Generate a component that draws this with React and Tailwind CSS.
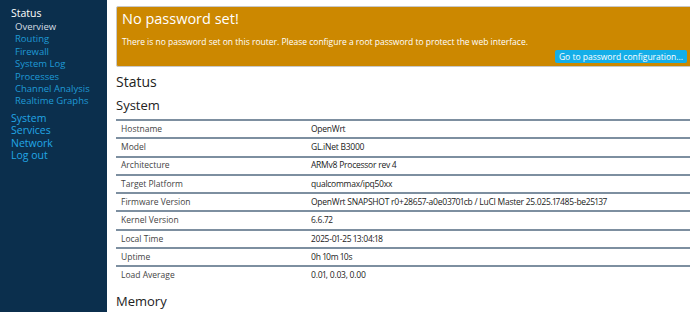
import React from 'react';

const subMenu = ['Overview', 'Routing', 'Firewall', 'System Log', 'Processes', 'Channel Analysis', 'Realtime Graphs'];
const topMenu = ['System', 'Services', 'Network', 'Log out'];

const rows = [
  ['Hostname', 'OpenWrt'],
  ['Model', 'GL.iNet B3000'],
  ['Architecture', 'ARMv8 Processor rev 4'],
  ['Target Platform', 'qualcommax/ipq50xx'],
  ['Firmware Version', 'OpenWrt SNAPSHOT r0+28657-a0e03701cb / LuCI Master 25.025.17485-be25137'],
  ['Kernel Version', '6.6.72'],
  ['Local Time', '2025-01-25 13:04:18'],
  ['Uptime', '0h 10m 10s'],
  ['Load Average', '0.01, 0.03, 0.00'],
];

const App = () => {
  return (
    <div
      className="flex w-[690px] h-[312px] overflow-hidden bg-white"
      style={{ fontFamily: '"Open Sans", "Liberation Sans", sans-serif' }}
    >
      {/* Sidebar */}
      <div className="w-[107px] shrink-0 bg-[#0b2f4d] pt-[6px] pl-[11px]">
        <div className="text-[10.5px] leading-[14px] text-white">Status</div>
        <div className="pl-[4px] pt-[1px]">
          {subMenu.map((item, i) => (
            <div
              key={item}
              className={`text-[9.5px] leading-[12.4px] ${i === 0 ? 'text-[#d6dde3]' : 'text-[#1f9ad6]'}`}
            >
              {item}
            </div>
          ))}
        </div>
        <div className="pt-[4px]">
          {topMenu.map((item) => (
            <div key={item} className="text-[10.5px] leading-[12.5px] text-[#22a6e6]">
              {item}
            </div>
          ))}
        </div>
      </div>

      {/* Main */}
      <div className="flex-1 pl-[9px] pt-[6px] min-w-0">
        {/* Alert */}
        <div className="w-[580px] h-[61px] bg-[#cc8800] border border-[#c8c8c8] rounded-[2px] pl-[5px] pt-[3px] relative">
          <div className="text-[14.5px] leading-[18px] text-white">No password set!</div>
          <div className="text-[8.5px] leading-[12px] text-white mt-[8px] whitespace-nowrap">
            There is no password set on this router. Please configure a root password to protect the web interface.
          </div>
          <div className="absolute right-[8px] top-[43px] h-[13px] px-[4px] bg-[#14aee8] rounded-[2px] text-[8.5px] leading-[13px] text-white whitespace-nowrap">
            Go to password configuration...
          </div>
        </div>

        <div className="text-[14px] leading-[18px] text-[#222] mt-[6px]">Status</div>
        <div className="text-[13px] leading-[16px] text-[#222] mt-[6px] font-medium">System</div>

        <div className="w-[580px] mt-[6px]">
          {rows.map(([k, v]) => (
            <div key={k} className="flex border-t-2 border-[#7d8fa0] h-[18.3px] items-center">
              <div className="w-[195px] shrink-0 pl-[5px] text-[8.5px] text-[#444] whitespace-nowrap">{k}</div>
              <div className="text-[8.5px] text-[#222] whitespace-nowrap proportional-nums tracking-[-0.25px]">{v}</div>
            </div>
          ))}
        </div>

        <div className="text-[13px] leading-[16px] text-[#222] mt-[9px] font-medium">Memory</div>
      </div>
    </div>
  );
};

export default App;
